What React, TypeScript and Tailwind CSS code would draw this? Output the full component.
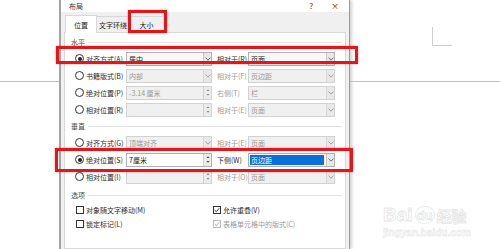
import React from "react";

const Chevron = ({ c = "#606060" }: { c?: string }) => (
  <svg width="6" height="4" viewBox="0 0 6 4">
    <path d="M0.6 0.6 L3 3.2 L5.4 0.6" fill="none" stroke={c} strokeWidth="0.9" />
  </svg>
);

const Spin = ({ c = "#505050" }: { c?: string }) => (
  <svg width="4" height="9" viewBox="0 0 4 9">
    <path d="M0.5 3 L2 1.2 L3.5 3 Z" fill={c} />
    <path d="M0.5 6 L2 7.8 L3.5 6 Z" fill={c} />
  </svg>
);

function Select({
  value,
  disabled,
  highlight,
  wide,
}: {
  value: string;
  disabled?: boolean;
  highlight?: boolean;
  wide?: boolean;
}) {
  return (
    <div
      className={`flex h-[14px] border ${wide ? "w-[87px]" : "w-[86px]"} ${
        disabled ? "border-[#d2d2d2] bg-[#f0f0f0]" : "border-[#b0b0b0] bg-[#f7f7f7]"
      }`}
    >
      <div className="flex-1 flex items-center pl-[1px] pr-[2px] overflow-hidden">
        <span
          className={`leading-[10px] px-[1px] ${
            highlight
              ? "bg-[#0a6fd8] text-white w-full"
              : disabled
              ? "text-[#9a9a9a]"
              : "text-[#222]"
          }`}
        >
          {value}
        </span>
      </div>
      <div
        className={`w-[8px] flex items-center justify-center border-l ${
          disabled ? "border-[#d8d8d8] bg-[#e8e8e8]" : "border-[#c8c8c8] bg-[#e8e8e8]"
        }`}
      >
        <Chevron c={disabled ? "#9a9a9a" : "#606060"} />
      </div>
    </div>
  );
}

function SpinInput({ value, disabled }: { value: string; disabled?: boolean }) {
  return (
    <div
      className={`flex h-[14px] w-[86px] border ${
        disabled ? "border-[#d2d2d2] bg-[#f0f0f0]" : "border-[#b0b0b0] bg-white"
      }`}
    >
      <div className="flex-1 flex items-center pl-[2px]">
        <span className={disabled ? "text-[#9a9a9a]" : "text-[#222]"}>{value}</span>
      </div>
      <div className="w-[8px] flex items-center justify-center border-l border-[#d0d0d0] bg-[#ececec]">
        <Spin c={disabled ? "#8a8a8a" : "#404040"} />
      </div>
    </div>
  );
}

function Radio({ checked }: { checked?: boolean }) {
  return (
    <div className="w-[9px] h-[9px] rounded-full border border-[#333] bg-white flex items-center justify-center shrink-0">
      {checked && <div className="w-[4px] h-[4px] rounded-full bg-[#222]" />}
    </div>
  );
}

function Check({ checked, disabled }: { checked?: boolean; disabled?: boolean }) {
  return (
    <div
      className={`w-[8px] h-[8px] border ${
        disabled ? "border-[#bcbcbc]" : "border-[#333]"
      } bg-white flex items-center justify-center shrink-0`}
    >
      {checked && (
        <svg width="6" height="6" viewBox="0 0 6 6">
          <path
            d="M0.7 3.1 L2.3 4.7 L5.3 1.2"
            fill="none"
            stroke={disabled ? "#a8a8a8" : "#222"}
            strokeWidth="0.9"
          />
        </svg>
      )}
    </div>
  );
}

function Row({
  checked,
  label,
  field,
  label2,
  label2Dim,
  field2,
}: {
  checked?: boolean;
  label: string;
  field: React.ReactNode;
  label2: string;
  label2Dim?: boolean;
  field2: React.ReactNode;
}) {
  return (
    <div className="flex items-center h-[17px] pl-[10px]">
      <Radio checked={checked} />
      <span className="w-[42px] pl-[2px] text-[#2a2a2a] whitespace-nowrap overflow-hidden">{label}</span>
      {field}
      <span
        className={`w-[36px] pl-[5px] whitespace-nowrap overflow-hidden ${
          label2Dim ? "text-[#9a9a9a]" : "text-[#2a2a2a]"
        }`}
      >
        {label2}
      </span>
      {field2}
    </div>
  );
}

function Header({ title }: { title: string }) {
  return (
    <div className="flex items-center h-[16px] pl-[6px] pr-[3px] gap-[3px]">
      <span className="text-[#4a4a4a]">{title}</span>
      <div className="flex-1 h-px bg-[#e3e3e3]" />
    </div>
  );
}

export default function App() {
  return (
    <div className="relative w-[500px] h-[249px] overflow-hidden bg-white flex font-['Noto_Sans_CJK_SC','Noto_Sans',sans-serif] text-[7px] leading-[10px]">
      {/* left document area */}
      <div className="w-[59px] shrink-0 pt-[81px]">
        <div className="h-px bg-[#a9c1e8]" />
      </div>

      {/* dialog */}
      <div className="w-[291px] shrink-0 flex flex-col bg-[#f0f0f0] border-l-2 border-l-[#a4a4a4] border-r border-r-[#9a9a9a] shadow-[2px_0_3px_rgba(0,0,0,0.18)]">
        {/* title bar */}
        <div className="h-[12px] bg-white flex items-center justify-between pl-[8px] pr-[10px]">
          <span className="text-[7px] leading-[10px] text-[#333]">布局</span>
          <div className="flex gap-[18px] text-[8px] leading-[10px] text-[#333]">
            <span>?</span>
            <span>×</span>
          </div>
        </div>
        <div className="h-[1px]" />
        {/* tab strip */}
        <div className="flex items-end h-[19px] pl-[4px] pt-[2px]">
          <div className="h-[18px] w-[32px] bg-white border border-b-0 border-[#d9d9d9] flex items-center justify-center text-[#222] relative top-[1px]">
            位置
          </div>
          <div className="h-[16px] w-[33px] border border-l-0 border-b-0 border-[#d9d9d9] flex items-center justify-center text-[#222]">
            文字环绕
          </div>
          <div className="h-[16px] w-[34px] border border-l-0 border-b-0 border-[#d9d9d9] flex items-center justify-center text-[#222]">
            大小
          </div>
        </div>
        {/* panel */}
        <div className="flex-1 ml-[3px] mr-[3px] bg-white border border-[#d9d9d9] pt-[1px]">
          <Header title="水平" />
          <Row
            checked
            label="对齐方式(A)"
            field={<Select value="居中" />}
            label2="相对于(R)"
            field2={<Select value="页面" wide />}
          />
          <Row
            label="书籍版式(B)"
            field={<Select value="内部" disabled />}
            label2="相对于(F)"
            label2Dim
            field2={<Select value="页边距" disabled wide />}
          />
          <Row
            label="绝对位置(P)"
            field={<SpinInput value="-3.14 厘米" disabled />}
            label2="右侧(T)"
            label2Dim
            field2={<Select value="栏" disabled wide />}
          />
          <Row
            label="相对位置(R)"
            field={<SpinInput value="" disabled />}
            label2="相对于(E)"
            label2Dim
            field2={<Select value="页面" disabled wide />}
          />
          <Header title="垂直" />
          <Row
            label="对齐方式(G)"
            field={<Select value="顶端对齐" disabled />}
            label2="相对于(E)"
            label2Dim
            field2={<Select value="页面" disabled wide />}
          />
          <Row
            checked
            label="绝对位置(S)"
            field={<SpinInput value="7厘米" />}
            label2="下侧(W)"
            field2={<Select value="页边距" highlight wide />}
          />
          <Row
            label="相对位置(I)"
            field={<SpinInput value="" disabled />}
            label2="相对于(O)"
            label2Dim
            field2={<Select value="页面" disabled wide />}
          />
          <div className="h-[2px]" />
          <Header title="选项" />
          <div className="flex h-[14px] items-center pl-[11px]">
            <div className="flex items-center w-[137px] gap-[2px]">
              <Check />
              <span className="text-[#2a2a2a]">对象随文字移动(M)</span>
            </div>
            <div className="flex items-center gap-[2px]">
              <Check checked />
              <span className="text-[#2a2a2a]">允许重叠(V)</span>
            </div>
          </div>
          <div className="flex h-[14px] items-center pl-[11px]">
            <div className="flex items-center w-[137px] gap-[2px]">
              <Check />
              <span className="text-[#2a2a2a]">锁定标记(L)</span>
            </div>
            <div className="flex items-center gap-[2px]">
              <Check checked disabled />
              <span className="text-[#9a9a9a]">表格单元格中的版式(C)</span>
            </div>
          </div>
        </div>
      </div>

      {/* right document area */}
      <div className="flex-1 flex flex-col">
        <div className="h-[27px]" />
        <div className="flex">
          <div className="w-[82px]" />
          <div className="w-[20px] h-[19px] border-l border-b border-[#cfcfcf]" />
        </div>
        <div className="h-[35px]" />
        <div className="h-px bg-[#a9c1e8]" />
        <div className="h-[124px]" />
        <div className="pl-[33px] flex flex-col">
          <div className="flex items-end gap-[2px] font-['Liberation_Sans',sans-serif] font-bold text-[19px] leading-[18px] text-white [-webkit-text-stroke:0.8px_#e6e6e6]">
            <span>Bai</span>
            <span className="text-[13px] leading-[14px] w-[20px] h-[18px] rounded-full border border-[#ececec] flex items-end justify-center">du</span>
            <span className="font-['Noto_Sans_CJK_SC',sans-serif] text-[15px] leading-[16px]">经验</span>
          </div>
          <div className="font-['Liberation_Sans',sans-serif] font-bold text-[10px] leading-[12px] mt-[3px] text-white [-webkit-text-stroke:0.5px_#e4e4e4]">
            jingyan.baidu.com
          </div>
        </div>
      </div>

      {/* red annotation boxes */}
      <div className="absolute left-[128px] top-[10px] w-[39px] h-[23px] border-[3px] border-[#e3161b] shadow-[0_0_2px_rgba(200,0,0,0.4)]" />
      <div className="absolute left-[56px] top-[46px] w-[302px] h-[18px] border-[3px] border-[#e3161b] shadow-[0_0_2px_rgba(200,0,0,0.4)]" />
      <div className="absolute left-[55px] top-[148px] w-[298px] h-[24px] border-[3px] border-[#e3161b] shadow-[0_0_2px_rgba(200,0,0,0.4)]" />
    </div>
  );
}
